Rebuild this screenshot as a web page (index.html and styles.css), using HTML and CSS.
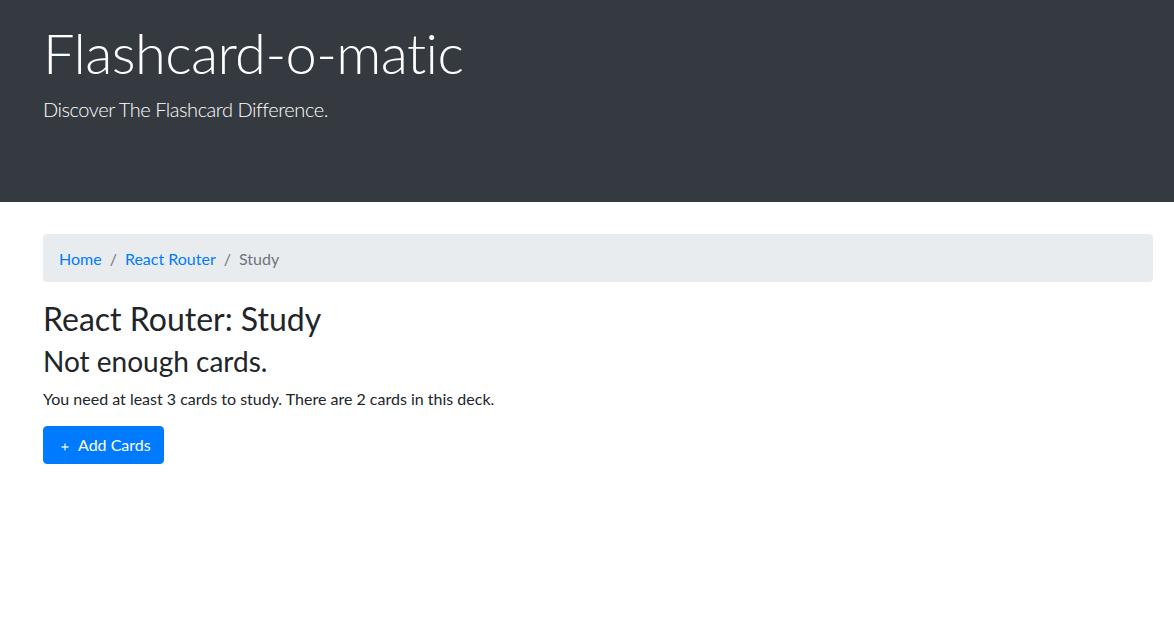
FILE: index.html
```html
<!DOCTYPE html>
<html lang="en">
<head>
<meta charset="utf-8">
<title>Flashcard-o-matic</title>
<link rel="stylesheet" href="styles.css">
</head>
<body>
<header class="jumbotron">
  <div class="container">
    <h1 class="display">Flashcard-o-matic</h1>
    <p class="lead">Discover The Flashcard Difference.</p>
  </div>
</header>
<main class="container">
  <nav aria-label="breadcrumb">
    <ol class="breadcrumb">
      <li class="crumb"><a href="#">Home</a></li>
      <li class="crumb"><a href="#">React Router</a></li>
      <li class="crumb active">Study</li>
    </ol>
  </nav>
  <h2 class="title">React Router: Study</h2>
  <h3 class="subtitle">Not enough cards.</h3>
  <p class="text">You need at least 3 cards to study. There are 2 cards in this deck.</p>
  <a class="btn" href="#"><svg class="icon" width="8" height="8" viewBox="0 0 8 8" aria-hidden="true"><path d="M4 0.5V7.5M0.5 4H7.5" stroke="currentColor" stroke-width="1.3" fill="none"/></svg>Add Cards</a>
</main>
</body>
</html>
```
FILE: styles.css
```css
* { box-sizing: border-box; }
html, body { margin: 0; padding: 0; }
body {
  font-family: Lato, "Liberation Sans", sans-serif;
  font-size: 16px;
  line-height: 24px;
  color: #212529;
  background: #fff;
}
.container {
  width: 1110px;
  margin-left: 43px;
}
.jumbotron {
  background: #343a40;
  color: #fff;
  height: 202px;
  padding-top: 19px;
  margin-bottom: 32px;
}
.display {
  margin: 0 0 8px;
  font-size: 56px;
  font-weight: 300;
  line-height: 67.2px;
  letter-spacing: -0.6px;
}
.lead {
  margin: 0;
  font-size: 20px;
  font-weight: 300;
  line-height: 30px;
  letter-spacing: -0.45px;
}
.breadcrumb {
  display: flex;
  list-style: none;
  margin: 0 0 16px;
  padding: 13px 16px 11px;
  background: #e9ecef;
  border-radius: 4px;
}
.crumb { color: #6c757d; }
.crumb + .crumb { padding-left: 8px; }
.crumb + .crumb::before {
  content: "/";
  padding-right: 8px;
  color: #6c757d;
}
.crumb a { color: #007bff; text-decoration: none; }
.title {
  margin: 0 0 6px;
  padding-top: 2px;
  font-size: 32px;
  font-weight: 400;
  line-height: 38.4px;
}
.subtitle {
  margin: 0 0 7px;
  padding-top: 1px;
  font-size: 28px;
  font-weight: 400;
  line-height: 33.6px;
}
.text { margin: 0 0 15px; padding-top: 1px; }
.btn {
  display: inline-flex;
  align-items: center;
  height: 38px;
  padding: 0 12px;
  border: 1px solid #007bff;
  border-radius: 4px;
  background: #007bff;
  color: #fff;
  text-decoration: none;
  font-size: 16px;
}
.icon {
  margin: 3px 9px 0 5px;
  color: #e6f0ff;
}
```
